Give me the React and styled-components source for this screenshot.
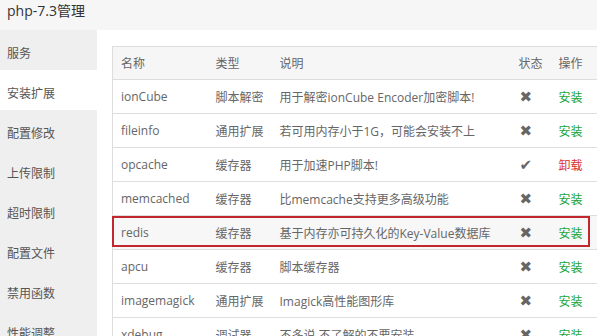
import React from "react";
import styled, { createGlobalStyle } from "styled-components";

const GlobalStyle = createGlobalStyle`
  html, body {
    margin: 0;
    padding: 0;
    background: #fff;
    font-family: "Open Sans", "Noto Sans CJK SC", sans-serif;
  }
`;

const Page = styled.div`
  width: 597px;
  height: 336px;
  overflow: hidden;
  display: flex;
  flex-direction: column;
`;

const TitleBar = styled.div`
  height: 30px;
  flex-shrink: 0;
  background: #f6f6f6;
  color: #333;
  font-size: 14px;
  line-height: 22px;
  padding-left: 7px;
`;

const Body = styled.div`
  flex: 1;
  display: flex;
  min-height: 0;
`;

const Sidebar = styled.ul`
  width: 97px;
  flex-shrink: 0;
  margin: 0;
  padding: 0;
  list-style: none;
  background: #efefef;
`;

const SideItem = styled.li`
  box-sizing: border-box;
  height: 40px;
  padding: 7px 0 0 7px;
  line-height: 34px;
  font-size: 12px;
  color: #555;
  white-space: nowrap;
  background: ${({ active }) => (active ? "#fff" : "transparent")};
`;

const Main = styled.div`
  flex: 1;
  padding: 16px 0 0 15px;
  overflow: hidden;
`;

const Table = styled.table`
  width: 520px;
  border-collapse: collapse;
  border: 1px solid #ddd;
  font-size: 12px;
  color: #666;
  table-layout: fixed;
`;

const Th = styled.th`
  box-sizing: border-box;
  height: 33px;
  padding: 0 0 0 8px;
  text-align: left;
  font-weight: normal;
  background: #f6f6f6;
  color: #666;
  width: ${({ w }) => w}px;
`;

const Row = styled.tr`
  border-top: 1px solid #ddd;
  background: ${({ marked }) => (marked ? "#f7f7f7" : "#fff")};
`;

const Td = styled.td`
  height: 33px;
  padding: 0 0 0 8px;
  white-space: nowrap;
  overflow: visible;
  position: relative;
`;

const Mark = styled.div`
  position: absolute;
  top: 0;
  left: -1px;
  width: 478px;
  height: 31px;
  border: 2px solid #c1272d;
  box-sizing: border-box;
  pointer-events: none;
`;

const Status = styled.span`
  font-family: "DejaVu Sans", sans-serif;
  font-size: 15px;
  color: #666;
  padding-left: 1px;
`;

const Action = styled.span`
  color: ${({ danger }) => (danger ? "#d9322e" : "#20a53a")};
`;

const sideItems = ["服务", "安装扩展", "配置修改", "上传限制", "超时限制", "配置文件", "禁用函数", "性能调整"];

const exts = [
  { name: "ionCube", type: "脚本解密", desc: "用于解密ionCube Encoder加密脚本!", on: false },
  { name: "fileinfo", type: "通用扩展", desc: "若可用内存小于1G，可能会安装不上", on: false },
  { name: "opcache", type: "缓存器", desc: "用于加速PHP脚本!", on: true },
  { name: "memcached", type: "缓存器", desc: "比memcache支持更多高级功能", on: false },
  { name: "redis", type: "缓存器", desc: "基于内存亦可持久化的Key-Value数据库", on: false, marked: true },
  { name: "apcu", type: "缓存器", desc: "脚本缓存器", on: false },
  { name: "imagemagick", type: "通用扩展", desc: "Imagick高性能图形库", on: false },
  { name: "xdebug", type: "调试器", desc: "不多说,不了解的不要安装", on: false },
];

const App = () => {
  return (
    <Page>
      <GlobalStyle />
      <TitleBar>php-7.3管理</TitleBar>
      <Body>
        <Sidebar>
          {sideItems.map((s, i) => (
            <SideItem key={s} active={i === 1}>
              {s}
            </SideItem>
          ))}
        </Sidebar>
        <Main>
          <Table>
            <thead>
              <tr>
                <Th w={95}>名称</Th>
                <Th w={64}>类型</Th>
                <Th w={239}>说明</Th>
                <Th w={40}>状态</Th>
                <Th w={82}>操作</Th>
              </tr>
            </thead>
            <tbody>
              {exts.map((e) => (
                <Row key={e.name} marked={e.marked}>
                  <Td>
                    {e.marked && <Mark />}
                    {e.name}
                  </Td>
                  <Td>{e.type}</Td>
                  <Td>{e.desc}</Td>
                  <Td>
                    <Status>{e.on ? "✔" : "✖"}</Status>
                  </Td>
                  <Td>
                    <Action danger={e.on}>{e.on ? "卸载" : "安装"}</Action>
                  </Td>
                </Row>
              ))}
            </tbody>
          </Table>
        </Main>
      </Body>
    </Page>
  );
};

export default App;
